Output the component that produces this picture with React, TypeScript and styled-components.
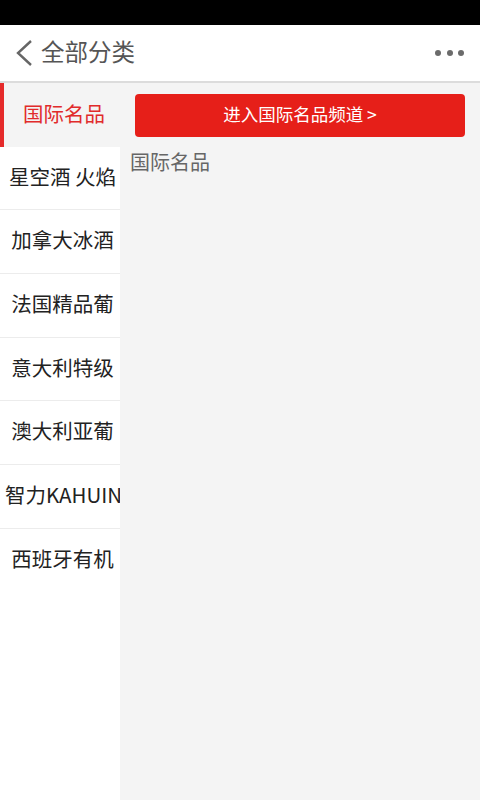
import { FC } from 'react'
import styled, { createGlobalStyle } from 'styled-components'

// names as the narrow column shows them
const CATEGORIES = [
    '国际名品',
    '星空酒 火焰',
    '加拿大冰酒',
    '法国精品葡',
    '意大利特级',
    '澳大利亚葡',
    '智力KAHUINE',
    '西班牙有机',
]

const GlobalStyle = createGlobalStyle`
    html, body {
        margin: 0;
        padding: 0;
        background: #fff;
    }
    body {
        font-family: 'Noto Sans CJK SC', 'Noto Sans', sans-serif;
    }
`

const Page = styled.div`
    display: flex;
    flex-direction: column;
    width: 480px;
    height: 800px;
    overflow: hidden;
`

const StatusBar = styled.div`
    height: 25px;
    background: #000;
    flex-shrink: 0;
`

const Header = styled.header`
    display: flex;
    align-items: center;
    height: 56px;
    padding: 0 15px;
    background: #fff;
    border-bottom: 2px solid #dcdcdc;
    flex-shrink: 0;
`

const BackButton = styled.button`
    display: flex;
    align-items: center;
    padding: 0;
    margin: 0 8px 0 0;
    border: none;
    background: none;
`

const HeaderTitle = styled.h1`
    flex: 1;
    margin: 0 0 3px;
    font-size: 23.5px;
    font-weight: 400;
    color: #555;
    line-height: 1.2;
`

const Dots = styled.div`
    display: flex;
    gap: 5.5px;
    margin-right: 1px;
`

const Dot = styled.span`
    width: 6px;
    height: 6px;
    border-radius: 50%;
    background: #6b6b6b;
`

const Body = styled.div`
    display: flex;
    flex: 1;
    min-height: 0;
`

const Sidebar = styled.nav`
    width: 120px;
    flex-shrink: 0;
    background: #fff;
`

const SideItem = styled.div<{ active?: boolean }>`
    display: flex;
    align-items: center;
    height: 63.7px;
    box-sizing: border-box;
    padding: ${({ active }) => (active ? '0 0 4px 4px' : '0 0 4px 5px')};
    border-bottom: ${({ active }) => (active ? 'none' : '1px solid #ececec')};
    border-left: ${({ active }) => (active ? '4px solid #e52a2a' : 'none')};
    background: ${({ active }) => (active ? '#f4f4f4' : '#fff')};
    color: ${({ active }) => (active ? '#e12b2b' : '#222')};
    font-size: 20.5px;
    line-height: 1.2;
    white-space: nowrap;
    overflow: hidden;
    &:last-child {
        border-bottom: none;
    }
`

const SideLabel = styled.span`
    flex: 1;
    text-align: center;
`

const Content = styled.main`
    flex: 1;
    display: flex;
    flex-direction: column;
    background: #f4f4f4;
    padding: 11px 15px 0 10px;
`

const ChannelButton = styled.button`
    height: 43px;
    margin-left: 5px;
    padding: 0 0 5px;
    border: none;
    border-radius: 4px;
    background: #e61f19;
    color: #fff;
    font-family: inherit;
    font-size: 17.5px;
    line-height: 1.2;
`

const SectionTitle = styled.div`
    margin-top: 10px;
    font-size: 20px;
    color: #666;
    line-height: 30px;
`

const BackIcon: FC = () => (
    <svg width="18" height="28" viewBox="0 0 18 28">
        <path d="M16 2 L3 14 L16 26" fill="none" stroke="#666" strokeWidth="2.4" />
    </svg>
)

export default function App() {
    return (
        <Page>
            <GlobalStyle />
            <StatusBar />
            <Header>
                <BackButton>
                    <BackIcon />
                </BackButton>
                <HeaderTitle>全部分类</HeaderTitle>
                <Dots>
                    <Dot />
                    <Dot />
                    <Dot />
                </Dots>
            </Header>
            <Body>
                <Sidebar>
                    {CATEGORIES.map((c, i) => (
                        <SideItem key={c} active={i === 0}>
                            <SideLabel>{c}</SideLabel>
                        </SideItem>
                    ))}
                </Sidebar>
                <Content>
                    <ChannelButton>进入国际名品频道 &gt;</ChannelButton>
                    <SectionTitle>国际名品</SectionTitle>
                </Content>
            </Body>
        </Page>
    )
}
